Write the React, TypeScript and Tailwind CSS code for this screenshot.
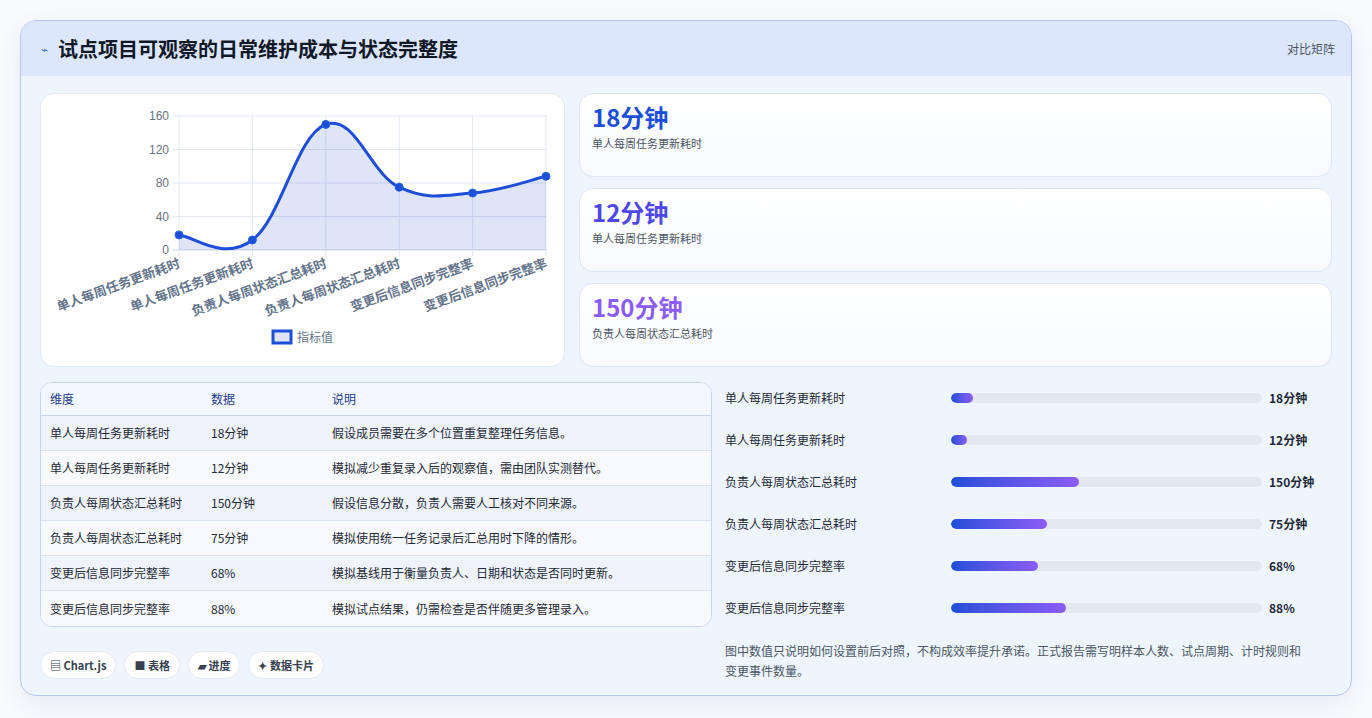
import React from "react";

const labels = ["单人每周任务更新耗时","单人每周任务更新耗时","负责人每周状态汇总耗时","负责人每周状态汇总耗时","变更后信息同步完整率","变更后信息同步完整率"];
const vals = [18, 12, 150, 75, 68, 88];
const disp = ["18分钟","12分钟","150分钟","75分钟","68%","88%"];
const notes = ["假设成员需要在多个位置重复整理任务信息。","模拟减少重复录入后的观察值，需由团队实测替代。","假设信息分散，负责人需要人工核对不同来源。","模拟使用统一任务记录后汇总用时下降的情形。","模拟基线用于衡量负责人、日期和状态是否同时更新。","模拟试点结果，仍需检查是否伴随更多管理录入。"];
const barPct = [7, 5, 41, 31, 28, 37];

const X0 = 138, X1 = 505, Y0 = 22, Y1 = 156;
const pts = vals.map((v, i) => [X0 + (i * (X1 - X0)) / 5, Y1 - (v / 160) * (Y1 - Y0)]);

function curve() {
  const t = 0.4;
  let d = `M${pts[0][0]},${pts[0][1]}`;
  for (let i = 0; i < pts.length - 1; i++) {
    const p0 = pts[i - 1] || pts[i];
    const p1 = pts[i];
    const p2 = pts[i + 1];
    const p3 = pts[i + 2] || p2;
    const c1 = [p1[0] + ((p2[0] - p0[0]) * t) / 2, p1[1] + ((p2[1] - p0[1]) * t) / 2];
    const c2 = [p2[0] - ((p3[0] - p1[0]) * t) / 2, p2[1] - ((p3[1] - p1[1]) * t) / 2];
    d += ` C${c1[0]},${c1[1]} ${c2[0]},${c2[1]} ${p2[0]},${p2[1]}`;
  }
  return d;
}

function Chart() {
  const d = curve();
  return (
    <svg width="524" height="273" viewBox="0 0 524 273" style={{ fontFamily: "'Liberation Sans','Noto Sans CJK SC',sans-serif" }}>
      {[0, 40, 80, 120, 160].map((v) => {
        const y = Y1 - (v / 160) * (Y1 - Y0);
        return (
          <g key={v}>
            <line x1={X0 - 6} x2={X1} y1={y} y2={y} stroke={v === 0 ? "#cbd5e1" : "#e2e8f0"} />
            <text x={X0 - 10} y={y + 4} textAnchor="end" fontSize="12" fill="#6b7280">{v}</text>
          </g>
        );
      })}
      {pts.map((p, i) => (
        <line key={i} x1={p[0]} x2={p[0]} y1={Y0} y2={Y1 + 6} stroke="#e2e8f0" />
      ))}
      <path d={`${d} L${X1},${Y1} L${X0},${Y1} Z`} fill="rgba(37,64,200,0.14)" />
      <path d={d} fill="none" stroke="#1d4ed8" strokeWidth="3" />
      {pts.map((p, i) => (
        <circle key={i} cx={p[0]} cy={p[1]} r="4" fill="#1d4ed8" stroke="#2563eb" strokeWidth="1" />
      ))}
      {pts.map((p, i) => (
        <text key={i} transform={`translate(${p[0] + 2},${Y1 + 17}) rotate(-20)`} textAnchor="end" fontSize="13" fontWeight="bold" fill="#64748b" style={{ fontFamily: "'Noto Sans CJK SC',sans-serif" }}>{labels[i]}</text>
      ))}
      <rect x="232" y="237" width="18" height="12" fill="rgba(37,64,200,0.14)" stroke="#1d4ed8" strokeWidth="3" />
      <text x="256" y="248" fontSize="12" fill="#64748b" style={{ fontFamily: "'Noto Sans CJK SC',sans-serif" }}>指标值</text>
    </svg>
  );
}

export default function App() {
  const cardColors = ["text-[#1d4ed8]", "text-[#4f46e5]", "text-[#8b5cf6]"];
  const cards = [["18分钟", labels[0]], ["12分钟", labels[1]], ["150分钟", labels[2]]];
  return (
    <div className="w-[1372px] h-[718px] bg-[#f8fafc] p-[20px] pb-[22px]" style={{ fontFamily: "'Noto Sans CJK SC','Liberation Sans',sans-serif" }}>
      <div className="h-full rounded-[16px] border border-[#b9c6ee] bg-[#eff5ff] overflow-hidden shadow-[0_8px_24px_rgba(30,64,175,0.08)]">
        <div className="h-[55px] bg-[#dce7fe] flex items-center justify-between px-[20px]">
          <div className="flex items-center gap-[10px]">
            <span className="text-[#4f6fd8] text-[12px]">⌁</span>
            <span className="text-[20px] font-bold text-[#111827]">试点项目可观察的日常维护成本与状态完整度</span>
          </div>
          <span className="text-[12px] text-[#4b5563] mr-[-4px]">对比矩阵</span>
        </div>
        <div className="px-[19px] pt-[17px]">
          <div className="flex gap-[14px]">
            <div className="w-[525px] h-[274px] bg-white rounded-[14px] border border-[#e2e8f5]">
              <Chart />
            </div>
            <div className="flex-1 flex flex-col gap-[11px]">
              {cards.map((c, i) => (
                <div key={i} className="h-[84px] rounded-[14px] border border-[#dde6f7] bg-gradient-to-b from-white to-[#f7faff] px-[12px] pt-[7px]">
                  <div className={`text-[24px] font-bold leading-[32px] ${cardColors[i]}`}>{c[0]}</div>
                  <div className="text-[11px] text-[#4b5563] mt-[2px]">{c[1]}</div>
                </div>
              ))}
            </div>
          </div>
          <div className="flex gap-[13px] mt-[15px]">
            <div className="w-[672px]">
              <div className="rounded-[12px] border border-[#c9d5ee] overflow-hidden bg-white">
                <div className="h-[33px] flex items-center text-[12px] text-[#1e3a8a] border-b border-[#c9d5ee] bg-[#f3f7ff]">
                  <div className="w-[170px] pl-[9px]">维度</div>
                  <div className="w-[121px]">数据</div>
                  <div>说明</div>
                </div>
                {labels.map((l, i) => (
                  <div key={i} className={`h-[35px] flex items-center text-[12px] text-[#1f2937] ${i < 5 ? "border-b border-[#dbe3f0]" : ""} ${i % 2 === 0 ? "bg-[#eef3fc]" : "bg-[#f7f9fd]"}`}>
                    <div className="w-[170px] pl-[9px]">{l}</div>
                    <div className="w-[121px]">{disp[i]}</div>
                    <div>{notes[i]}</div>
                  </div>
                ))}
              </div>
              <div className="flex gap-[8px] mt-[24px]">
                {["▤ Chart.js", "■ 表格", "▰ 进度", "✦ 数据卡片"].map((t) => (
                  <span key={t} className="h-[28px] px-[9px] rounded-full bg-white border border-[#e5eaf3] text-[11px] font-bold text-[#374151] flex items-center">{t}</span>
                ))}
              </div>
            </div>
            <div className="flex-1 -mt-[5px]">
              <div className="flex flex-col">
                {labels.map((l, i) => (
                  <div key={i} className="h-[42px] flex items-center">
                    <div className="w-[226px] text-[12px] text-[#1f2937]">{l}</div>
                    <div className="w-[311px] h-[10px] rounded-full bg-[#e2e8f0] overflow-hidden">
                      <div className="h-full rounded-full bg-gradient-to-r from-[#1d4ed8] to-[#8b5cf6]" style={{ width: `${barPct[i]}%` }} />
                    </div>
                    <div className="ml-[7px] text-[12px] font-bold text-[#1f2937]">{disp[i]}</div>
                  </div>
                ))}
              </div>
              <p className="mt-[12px] text-[12px] leading-[20px] text-[#4b5563] pr-[30px]">图中数值只说明如何设置前后对照，不构成效率提升承诺。正式报告需写明样本人数、试点周期、计时规则和变更事件数量。</p>
            </div>
          </div>
        </div>
      </div>
    </div>
  );
}
